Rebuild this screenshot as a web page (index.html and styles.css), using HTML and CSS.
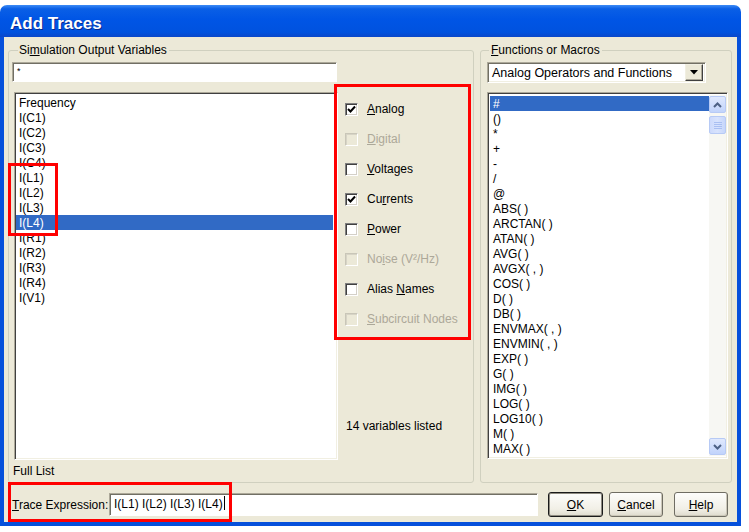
FILE: index.html
```html
<!DOCTYPE html>
<html lang="en">
<head>
    <meta charset="UTF-8">
    <title>Add Traces</title>
    <link rel="stylesheet" href="styles.css">
</head>
<body>
<div class="window">
    <div class="titlebar">Add Traces</div>
    <div class="client">
        <div class="panes">
            <fieldset class="group group-outputs">
                <legend>Si<u>m</u>ulation Output Variables</legend>
                <div class="textbox filter">*</div>
                <div class="outputs-body">
                    <ul class="listbox vars">
                        <li>Frequency</li>
                        <li>I(C1)</li>
                        <li>I(C2)</li>
                        <li>I(C3)</li>
                        <li>I(C4)</li>
                        <li>I(L1)</li>
                        <li>I(L2)</li>
                        <li>I(L3)</li>
                        <li class="selected">I(L4)</li>
                        <li>I(R1)</li>
                        <li>I(R2)</li>
                        <li>I(R3)</li>
                        <li>I(R4)</li>
                        <li>I(V1)</li>
                    </ul>
                    <div class="options">
                        <div class="check"><span class="box"><svg width="9" height="9" viewBox="0 0 9 9"><path d="M1 4 L3.5 6.5 L8 1.5" fill="none" stroke="#000" stroke-width="2"/></svg></span><span><u>A</u>nalog</span></div>
                        <div class="check disabled"><span class="box"></span><span><u>D</u>igital</span></div>
                        <div class="check"><span class="box"></span><span><u>V</u>oltages</span></div>
                        <div class="check"><span class="box"><svg width="9" height="9" viewBox="0 0 9 9"><path d="M1 4 L3.5 6.5 L8 1.5" fill="none" stroke="#000" stroke-width="2"/></svg></span><span>Cu<u>r</u>rents</span></div>
                        <div class="check"><span class="box"></span><span><u>P</u>ower</span></div>
                        <div class="check disabled"><span class="box"></span><span>No<u>i</u>se (V²/Hz)</span></div>
                        <div class="check"><span class="box"></span><span>Alias <u>N</u>ames</span></div>
                        <div class="check disabled"><span class="box"></span><span><u>S</u>ubcircuit Nodes</span></div>
                        <p class="count">14 variables listed</p>
                    </div>
                </div>
                <div class="full-list">Full List</div>
            </fieldset>

            <fieldset class="group group-funcs">
                <legend><u>F</u>unctions or Macros</legend>
                <div class="combo">
                    <span class="combo-text">Analog Operators and Functions</span>
                    <span class="combo-btn"><svg width="8" height="5" viewBox="0 0 8 5"><path d="M0 0 H8 L4 4.5 Z" fill="#000"/></svg></span>
                </div>
                <div class="listbox funcs">
                    <ul>
                        <li class="selected">#</li>
                        <li>()</li>
                        <li>*</li>
                        <li>+</li>
                        <li>-</li>
                        <li>/</li>
                        <li>@</li>
                        <li>ABS( )</li>
                        <li>ARCTAN( )</li>
                        <li>ATAN( )</li>
                        <li>AVG( )</li>
                        <li>AVGX( , )</li>
                        <li>COS( )</li>
                        <li>D( )</li>
                        <li>DB( )</li>
                        <li>ENVMAX( , )</li>
                        <li>ENVMIN( , )</li>
                        <li>EXP( )</li>
                        <li>G( )</li>
                        <li>IMG( )</li>
                        <li>LOG( )</li>
                        <li>LOG10( )</li>
                        <li>M( )</li>
                        <li>MAX( )</li>
                    </ul>
                    <div class="scrollbar">
                        <span class="sb-btn"><svg width="9" height="6" viewBox="0 0 9 6"><path d="M1 5 L4.5 1.5 L8 5" fill="none" stroke="#4d6185" stroke-width="2"/></svg></span>
                        <span class="sb-thumb"><svg width="8" height="8" viewBox="0 0 8 8"><path d="M0 1.5 H8 M0 3.5 H8 M0 5.5 H8 M0 7.5 H8" stroke="#a9bff2" stroke-width="1"/></svg></span>
                        <span class="sb-track"></span>
                        <span class="sb-btn"><svg width="9" height="6" viewBox="0 0 9 6"><path d="M1 1 L4.5 4.5 L8 1" fill="none" stroke="#4d6185" stroke-width="2"/></svg></span>
                    </div>
                </div>
            </fieldset>
        </div>

        <div class="trace-row">
            <span class="trace-label"><u>T</u>race Expression:</span>
            <div class="textbox trace-input">I(L1) I(L2) I(L3) I(L4)<span class="caret"></span></div>
            <button class="btn btn-ok"><u>O</u>K</button>
            <button class="btn btn-cancel"><u>C</u>ancel</button>
            <button class="btn btn-help"><u>H</u>elp</button>
        </div>
    </div>

    <!-- red annotation frames drawn over the dialog -->
    <div class="mark mark-vars"></div>
    <div class="mark mark-options"></div>
    <div class="mark mark-trace"></div>
</div>
</body>
</html>
```

FILE: styles.css
```css
* { margin: 0; padding: 0; box-sizing: border-box; }
body { background: #fff; font-family: 'Liberation Sans', Arial, sans-serif; font-size: 12px; color: #000; padding-top: 5px; }
ul { list-style: none; }
u { text-decoration: underline; text-underline-offset: 1px; }

.window { position: relative; width: 741px; }
.titlebar { height: 32px; padding: 5px 0 0 10px; line-height: 27px; border-radius: 7px 7px 0 0; background: linear-gradient(#3d8bf5 0, #0a5fe6 12%, #0055e5 45%, #0052df 85%, #0a47c9 100%); color: #fff; font-size: 17px; font-weight: 700; text-shadow: 1px 1px 0 #0a2a8f; }
.client { background: #ece9d8; border: 4px solid #0650db; border-top: none; height: 489px; padding: 7px 5px 5px 4px; display: flex; flex-direction: column; }

.panes { display: flex; gap: 6px; height: 439px; }
.group { border: 1px solid #d0d0bf; border-radius: 3px; display: flex; flex-direction: column; min-width: 0; }
.group legend { line-height: 13px; padding: 0 2px; margin-left: 6px; }
.group-outputs { width: 466px; padding: 0 3px; }
.group-outputs legend { margin-left: 6px; padding-left: 1px; }
.group-funcs { width: 252px; padding: 0 3px 0 6px; }
.group-funcs legend { margin-left: 2px; }

.textbox { background: #fff; border-style: solid; border-width: 1px; border-color: #aca899 #fff #fff #aca899; box-shadow: inset 1px 1px 0 #716f64; }
.filter { width: 325px; height: 20px; margin-top: 5px; padding: 2px 4px; font-size: 9px; line-height: 12px; }

.outputs-body { display: flex; margin-top: 10px; height: 368px; }
.listbox { background: #fff; border-style: solid; border-width: 1px; border-color: #aca899 #fff #fff #aca899; box-shadow: inset 1px 1px 0 #404040, inset -1px -1px 0 #f1efe2; }
.listbox li { line-height: 15px; height: 15px; padding-left: 3px; padding-top: 1px; white-space: nowrap; }
.listbox li.selected { background: #316ac5; color: #fff; }
.vars { width: 324px; margin-left: 2px; padding: 2px 4px 2px 1px; }

.options { flex: 1; display: flex; flex-direction: column; padding: 2px 0 0 7px; }
.check { display: flex; align-items: center; height: 30px; gap: 9px; }
.check .box { width: 13px; height: 13px; background: #fff; border-style: solid; border-width: 1px; border-color: #808080 #fff #fff #808080; box-shadow: inset 1px 1px 0 #404040, inset -1px -1px 0 #d4d0c8; display: flex; align-items: center; justify-content: center; }
.check.disabled { color: #aca899; }
.check.disabled .box { background: #ece9d8; border-color: #c9c6b8 #fff #fff #c9c6b8; box-shadow: inset 1px 1px 0 #d7d4c6; }
.count { margin-top: auto; margin-bottom: 26px; line-height: 15px; padding-left: 1px; }
.full-list { margin-top: 4px; line-height: 15px; padding-left: 1px; }

.combo { display: flex; align-items: center; width: 219px; height: 21px; margin-top: 5px; background: #fff; border-style: solid; border-width: 1px; border-color: #aca899 #fff #fff #aca899; box-shadow: inset 1px 1px 0 #716f64, inset -1px -1px 0 #f1efe2; padding: 2px 2px 2px 4px; }
.combo-text { flex: 1; white-space: nowrap; font-size: 12.5px; }
.combo-btn { width: 18px; height: 17px; background: #ece9d8; border-style: solid; border-width: 1px; border-color: #f1efe2 #404040 #404040 #f1efe2; box-shadow: inset -1px -1px 0 #aca899; display: flex; align-items: center; justify-content: center; }

.funcs { display: flex; width: 241px; height: 367px; margin-top: 9px; padding: 2px 1px 2px 2px; }
.funcs ul { flex: 1; padding-top: 1px; }
.scrollbar { width: 17px; display: flex; flex-direction: column; background: #f7f7f3; }
.sb-btn { height: 17px; margin: 1px 0; border: 1px solid #b7caf5; border-radius: 2px; background: linear-gradient(#e0e9fd, #c1d3fb); display: flex; align-items: center; justify-content: center; }
.sb-thumb { height: 18px; margin-top: 2px; border: 1px solid #b7caf5; border-radius: 2px; background: linear-gradient(90deg, #cddafc, #d8e3fd 50%, #c6d6fb); display: flex; align-items: center; justify-content: center; }
.sb-track { flex: 1; }

.trace-row { display: flex; align-items: center; height: 25px; margin-top: 9px; }
.trace-label { width: 101px; padding-left: 4px; white-space: nowrap; }
.trace-input { width: 429px; height: 23px; padding: 0 0 0 4px; line-height: 21px; white-space: nowrap; }
.caret { display: inline-block; width: 1px; height: 14px; background: #000; vertical-align: -2px; margin-left: 1px; }
.btn { height: 25px; font-family: inherit; font-size: 12px; color: #000; border: 1px solid #6f6d63; border-radius: 3px; background: linear-gradient(#fdfdfb, #f1efe6 70%, #dedbcd); box-shadow: inset -1px -1px 0 #cbc7b8; }
.btn-ok { width: 55px; margin-left: 10px; border-color: #1a1a1a; box-shadow: inset 0 0 0 1px #8e8b80; }
.btn-cancel { width: 54px; margin-left: 6px; }
.btn-help { width: 54px; margin-left: 11px; }

.mark { position: absolute; border: 3px solid #f00; pointer-events: none; }
.mark-vars { left: 8px; top: 158px; width: 50px; height: 73px; }
.mark-options { left: 334px; top: 79px; width: 137px; height: 256px; }
.mark-trace { left: 8px; top: 477px; width: 224px; height: 40px; }
```
